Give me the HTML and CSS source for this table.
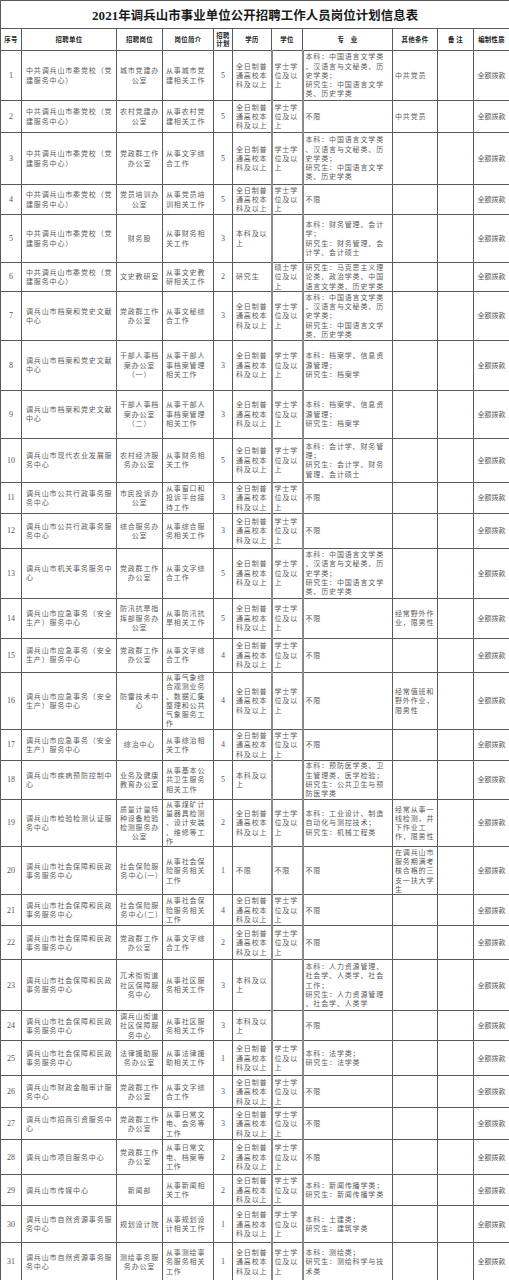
FILE: index.html
```html
<!DOCTYPE html>
<html lang="zh-CN">
<head>
<meta charset="utf-8">
<title>2021年调兵山市事业单位公开招聘工作人员岗位计划信息表</title>
<link rel="stylesheet" href="styles.css">
</head>
<body>
<table class="t">
<colgroup>
<col class="w-no"><col class="w-unit"><col class="w-post"><col class="w-intro"><col class="w-plan"><col class="w-edu"><col class="w-deg"><col class="w-major"><col class="w-other"><col class="w-note"><col class="w-type">
</colgroup>
<thead>
<tr class="title-row"><th colspan="11" class="title"><span class="num">2021</span>年调兵山市事业单位公开招聘工作人员岗位计划信息表</th></tr>
<tr class="head-row">
<th>序号</th><th>招聘单位</th><th>招聘岗位</th><th>岗位简介</th><th>招聘<br>计划</th><th>学历</th><th>学位</th><th>专　业</th><th>其他条件</th><th>备 注</th><th>编制性质</th>
</tr>
</thead>
<tbody>
<tr class="h50"><td>1</td><td>中共调兵山市委党校（党<br>建服务中心）</td><td>城市党建办<br>公室</td><td>从事城市党<br>建相关工作</td><td>5</td><td>全日制普<br>通高校本<br>科及以上</td><td>学士学<br>位及以<br>上</td><td>本科：中国语言文学类<br>、汉语言与文秘类、历<br>史学类；<br>研究生：中国语言文学<br>类、历史学类</td><td>中共党员</td><td></td><td>全额拨款</td></tr>
<tr class="h32"><td>2</td><td>中共调兵山市委党校（党<br>建服务中心）</td><td>农村党建办<br>公室</td><td>从事农村党<br>建相关工作</td><td>5</td><td>全日制普<br>通高校本<br>科及以上</td><td>学士学<br>位及以<br>上</td><td>不限</td><td>中共党员</td><td></td><td>全额拨款</td></tr>
<tr class="h52"><td>3</td><td>中共调兵山市委党校（党<br>建服务中心）</td><td>党政群工作<br>办公室</td><td>从事文字综<br>合工作</td><td>5</td><td>全日制普<br>通高校本<br>科及以上</td><td>学士学<br>位及以<br>上</td><td>本科：中国语言文学类<br>、汉语言与文秘类、历<br>史学类；<br>研究生：中国语言文学<br>类、历史学类</td><td></td><td></td><td>全额拨款</td></tr>
<tr class="h30"><td>4</td><td>中共调兵山市委党校（党<br>建服务中心）</td><td>党员培训办<br>公室</td><td>从事党员培<br>训相关工作</td><td>5</td><td>全日制普<br>通高校本<br>科及以上</td><td>学士学<br>位及以<br>上</td><td>不限</td><td></td><td></td><td>全额拨款</td></tr>
<tr class="h48"><td>5</td><td>中共调兵山市委党校（党<br>建服务中心）</td><td>财务股</td><td>从事财务相<br>关工作</td><td>3</td><td>本科及以<br>上</td><td></td><td>本科：财务管理、会计<br>学；<br>研究生：财务管理、会<br>计学、会计硕士</td><td></td><td></td><td>全额拨款</td></tr>
<tr class="h27"><td>6</td><td>中共调兵山市委党校（党<br>建服务中心）</td><td>文史教研室</td><td>从事文史教<br>研相关工作</td><td>2</td><td>研究生</td><td>硕士学<br>位及以<br>上</td><td>研究生：马克思主义理<br>论类、政治学类、中国<br>语言文学类、历史学类</td><td></td><td></td><td>全额拨款</td></tr>
<tr class="h49"><td>7</td><td>调兵山市档案和党史文献<br>中心</td><td>党政群工作<br>办公室</td><td>从事文秘综<br>合工作</td><td>3</td><td>全日制普<br>通高校本<br>科及以上</td><td>学士学<br>位及以<br>上</td><td>本科：中国语言文学类<br>、汉语言与文秘类、历<br>史学类；<br>研究生：中国语言文学<br>类、历史学类</td><td></td><td></td><td>全额拨款</td></tr>
<tr class="h50"><td>8</td><td>调兵山市档案和党史文献<br>中心</td><td>干部人事档<br>案办公室<br>（一）</td><td>从事干部人<br>事档案管理<br>相关工作</td><td>3</td><td>全日制普<br>通高校本<br>科及以上</td><td>学士学<br>位及以<br>上</td><td>本科：档案学、信息资<br>源管理；<br>研究生：档案学</td><td></td><td></td><td>全额拨款</td></tr>
<tr class="h48"><td>9</td><td>调兵山市档案和党史文献<br>中心</td><td>干部人事档<br>案办公室<br>（二）</td><td>从事干部人<br>事档案管理<br>相关工作</td><td>3</td><td>全日制普<br>通高校本<br>科及以上</td><td>学士学<br>位及以<br>上</td><td>本科：档案学、信息资<br>源管理；<br>研究生：档案学</td><td></td><td></td><td>全额拨款</td></tr>
<tr class="h44"><td>10</td><td>调兵山市现代农业发展服<br>务中心</td><td>农村经济服<br>务办公室</td><td>从事财务相<br>关工作</td><td>5</td><td>全日制普<br>通高校本<br>科及以上</td><td>学士学<br>位及以<br>上</td><td>本科：会计学、财务管<br>理；<br>研究生：会计学、财务<br>管理、会计硕士</td><td></td><td></td><td>全额拨款</td></tr>
<tr class="h31"><td>11</td><td>调兵山市公共行政事务服<br>务中心</td><td>市民投诉办<br>公室</td><td>从事窗口和<br>投诉平台接<br>待工作</td><td>3</td><td>全日制普<br>通高校本<br>科及以上</td><td>学士学<br>位及以<br>上</td><td>不限</td><td></td><td></td><td>全额拨款</td></tr>
<tr class="h35"><td>12</td><td>调兵山市公共行政事务服<br>务中心</td><td>综合服务办<br>公室</td><td>从事综合服<br>务相关工作</td><td>3</td><td>全日制普<br>通高校本<br>科及以上</td><td>学士学<br>位及以<br>上</td><td>不限</td><td></td><td></td><td>全额拨款</td></tr>
<tr class="h50"><td>13</td><td>调兵山市机关事务服务中<br>心</td><td>党政群工作<br>办公室</td><td>从事文字综<br>合工作</td><td>5</td><td>全日制普<br>通高校本<br>科及以上</td><td>学士学<br>位及以<br>上</td><td>本科：中国语言文学类<br>、汉语言与文秘类、历<br>史学类；<br>研究生：中国语言文学<br>类、历史学类</td><td></td><td></td><td>全额拨款</td></tr>
<tr class="h40"><td>14</td><td>调兵山市应急事务（安全<br>生产）服务中心</td><td>防汛抗旱指<br>挥部服务办<br>公室</td><td>从事防汛抗<br>旱相关工作</td><td>5</td><td>全日制普<br>通高校本<br>科及以上</td><td>学士学<br>位及以<br>上</td><td>不限</td><td>经常野外作<br>业，限男性</td><td></td><td>全额拨款</td></tr>
<tr class="h34"><td>15</td><td>调兵山市应急事务（安全<br>生产）服务中心</td><td>党政群工作<br>办公室</td><td>从事文字综<br>合工作</td><td>4</td><td>全日制普<br>通高校本<br>科及以上</td><td>学士学<br>位及以<br>上</td><td>不限</td><td></td><td></td><td>全额拨款</td></tr>
<tr class="h57"><td>16</td><td>调兵山市应急事务（安全<br>生产）服务中心</td><td>防雷技术中<br>心</td><td>从事气象综<br>合观测业务<br>、数据汇集<br>整理和公共<br>气象服务工<br>作</td><td>4</td><td>全日制普<br>通高校本<br>科及以上</td><td>学士学<br>位及以<br>上</td><td>不限</td><td>经常值班和<br>野外作业，<br>限男性</td><td></td><td>全额拨款</td></tr>
<tr class="h31"><td>17</td><td>调兵山市应急事务（安全<br>生产）服务中心</td><td>综治中心</td><td>从事综治相<br>关工作</td><td>4</td><td>全日制普<br>通高校本<br>科及以上</td><td>学士学<br>位及以<br>上</td><td>不限</td><td></td><td></td><td>全额拨款</td></tr>
<tr class="h39"><td>18</td><td>调兵山市疾病预防控制中<br>心</td><td>业务及健康<br>教育办公室</td><td>从事基本公<br>共卫生服务<br>相关工作</td><td>5</td><td>本科及以<br>上</td><td></td><td>本科：预防医学类、卫<br>生管理类、医学检验；<br>研究生：公共卫生与预<br>防医学类</td><td></td><td></td><td>全额拨款</td></tr>
<tr class="h47"><td>19</td><td>调兵山市检验检测认证服<br>务中心</td><td>质量计量特<br>种设备检验<br>检测服务办<br>公室</td><td>从事煤矿计<br>量器具检测<br>、设计安装<br>、维修等工<br>作</td><td>2</td><td>全日制普<br>通高校本<br>科及以上</td><td>学士学<br>位及以<br>上</td><td>本科：工业设计、制造<br>自动化与测控技术；<br>研究生：机械工程类</td><td>经常从事一<br>线检测，井<br>下作业工<br>作，限男性</td><td></td><td>全额拨款</td></tr>
<tr class="h48"><td>20</td><td>调兵山市社会保障和民政<br>事务服务中心</td><td>社会保险服<br>务中心(一)</td><td>从事社会保<br>险服务相关<br>工作</td><td>1</td><td>不限</td><td>不限</td><td>不限</td><td>在调兵山市<br>服务期满考<br>核合格的三<br>支一扶大学<br>生</td><td></td><td>全额拨款</td></tr>
<tr class="h31"><td>21</td><td>调兵山市社会保障和民政<br>事务服务中心</td><td>社会保险服<br>务中心(二)</td><td>从事社会保<br>险服务相关<br>工作</td><td>4</td><td>全日制普<br>通高校本<br>科及以上</td><td>学士学<br>位及以<br>上</td><td>不限</td><td></td><td></td><td>全额拨款</td></tr>
<tr class="h34"><td>22</td><td>调兵山市社会保障和民政<br>事务服务中心</td><td>党政群工作<br>办公室</td><td>从事文字综<br>合工作</td><td>2</td><td>全日制普<br>通高校本<br>科及以上</td><td>学士学<br>位及以<br>上</td><td>不限</td><td></td><td></td><td>全额拨款</td></tr>
<tr class="h51"><td>23</td><td>调兵山市社会保障和民政<br>事务服务中心</td><td>兀术街街道<br>社区保障服<br>务中心</td><td>从事社区服<br>务相关工作</td><td>3</td><td>本科及以<br>上</td><td></td><td>本科：人力资源管理、<br>社会学、人类学、社会<br>工作；<br>研究生：人力资源管理<br>、社会学、人类学</td><td></td><td></td><td>全额拨款</td></tr>
<tr class="h30"><td>24</td><td>调兵山市社会保障和民政<br>事务服务中心</td><td>调兵山街道<br>社区保障服<br>务中心</td><td>从事社区服<br>务相关工作</td><td>3</td><td>本科及以<br>上</td><td></td><td>不限</td><td></td><td></td><td>全额拨款</td></tr>
<tr class="h35"><td>25</td><td>调兵山市社会保障和民政<br>事务服务中心</td><td>法律援助服<br>务办公室</td><td>从事法律援<br>助相关工作</td><td>1</td><td>全日制普<br>通高校本<br>科及以上</td><td>学士学<br>位及以<br>上</td><td>本科：法学类；<br>研究生：法学类</td><td></td><td></td><td>全额拨款</td></tr>
<tr class="h32"><td>26</td><td>调兵山市财政金融审计服<br>务中心</td><td>党政群工作<br>办公室</td><td>从事文字综<br>合工作</td><td>3</td><td>全日制普<br>通高校本<br>科及以上</td><td>学士学<br>位及以<br>上</td><td>不限</td><td></td><td></td><td>全额拨款</td></tr>
<tr class="h32"><td>27</td><td>调兵山市招商引资服务中<br>心</td><td>党政群工作<br>办公室</td><td>从事日常文<br>电、会务等<br>工作</td><td>3</td><td>全日制普<br>通高校本<br>科及以上</td><td>学士学<br>位及以<br>上</td><td>不限</td><td></td><td></td><td>全额拨款</td></tr>
<tr class="h35"><td>28</td><td>调兵山市项目服务中心</td><td>党政群工作<br>办公室</td><td>从事日常文<br>电、档案等<br>工作</td><td>2</td><td>全日制普<br>通高校本<br>科及以上</td><td>学士学<br>位及以<br>上</td><td>不限</td><td></td><td></td><td>全额拨款</td></tr>
<tr class="h31"><td>29</td><td>调兵山市传媒中心</td><td>新闻部</td><td>从事新闻相<br>关工作</td><td>2</td><td>全日制普<br>通高校本<br>科及以上</td><td>学士学<br>位及以<br>上</td><td>本科：新闻传播学类；<br>研究生：新闻传播学类</td><td></td><td></td><td>全额拨款</td></tr>
<tr class="h37"><td>30</td><td>调兵山市自然资源事务服<br>务中心</td><td>规划设计院</td><td>从事规划设<br>计相关工作</td><td>1</td><td>全日制普<br>通高校本<br>科及以上</td><td>学士学<br>位及以<br>上</td><td>本科：土建类；<br>研究生：建筑学类</td><td></td><td></td><td>全额拨款</td></tr>
<tr class="h38"><td>31</td><td>调兵山市自然资源事务服<br>务中心</td><td>测绘事务服<br>务办公室</td><td>从事测绘事<br>务服务相关<br>工作</td><td>1</td><td>全日制普<br>通高校本<br>科及以上</td><td>学士学<br>位及以<br>上</td><td>本科：测绘类；<br>研究生：测绘科学与技<br>术类</td><td></td><td></td><td>全额拨款</td></tr>
</tbody>
</table>
</body>
</html>
```

FILE: styles.css
```css
html, body {
  margin: 0;
  padding: 0;
  background: #ffffff;
}

body {
  font-family: "Noto Sans CJK SC", "Noto Sans", sans-serif;
  color: #555;
}

.t {
  width: 509px;
  table-layout: fixed;
  border-collapse: collapse;
}

.w-no { width: 21px; }
.w-unit { width: 95px; }
.w-post { width: 46px; }
.w-intro { width: 51px; }
.w-plan { width: 19px; }
.w-edu { width: 39px; }
.w-deg { width: 31px; }
.w-major { width: 90px; }
.w-other { width: 45px; }
.w-note { width: 36px; }
.w-type { width: 36px; }

.t th,
.t td {
  border: 1px solid #5a5a5a;
  padding: 0;
  vertical-align: middle;
  overflow: hidden;
  white-space: nowrap;
}

.title-row {
  height: 28px;
}

.title {
  font-size: 12.4px;
  font-weight: 700;
  color: #1a1a1a;
  letter-spacing: 0.1px;
  text-align: center;
  border-bottom: 1px solid #5a5a5a;
}

.title .num {
  font-family: "Liberation Serif", serif;
  font-size: 13px;
  font-weight: 700;
}

.head-row {
  height: 22px;
}

.head-row th {
  font-size: 6.4px;
  line-height: 8px;
  font-weight: 700;
  color: #222;
  text-align: center;
  letter-spacing: 0.3px;
}

tbody td {
  font-size: 7px;
  line-height: 9.3px;
  letter-spacing: 0.85px;
  color: #5a5a5a;
  text-align: left;
}

tbody td:nth-child(1),
tbody td:nth-child(5) {
  font-family: "Liberation Serif", serif;
  font-size: 8px;
  letter-spacing: 0;
  text-align: center;
  color: #555;
}

tbody td:nth-child(2) {
  padding-left: 4px;
}

tbody td:nth-child(3) {
  text-align: center;
}

tbody td:nth-child(4) {
  padding-left: 3px;
}

tbody td:nth-child(6) {
  padding-left: 3px;
}

tbody td:nth-child(7) {
  padding-left: 2px;
  border-left-color: #8a8a8a;
  border-right-color: #8a8a8a;
  border-left-width: 2px;
  border-right-width: 2px;
}

tbody td:nth-child(8),
tbody td:nth-child(9) {
  padding-left: 2px;
}

tbody td:nth-child(11) {
  text-align: center;
  letter-spacing: 0;
}

.h27 { height: 27px; }
.h30 { height: 30px; }
.h31 { height: 31px; }
.h32 { height: 32px; }
.h34 { height: 34px; }
.h35 { height: 35px; }
.h37 { height: 37px; }
.h38 { height: 38px; }
.h39 { height: 39px; }
.h40 { height: 40px; }
.h44 { height: 44px; }
.h47 { height: 47px; }
.h48 { height: 48px; }
.h49 { height: 49px; }
.h50 { height: 50px; }
.h51 { height: 51px; }
.h52 { height: 52px; }
.h57 { height: 57px; }
```
